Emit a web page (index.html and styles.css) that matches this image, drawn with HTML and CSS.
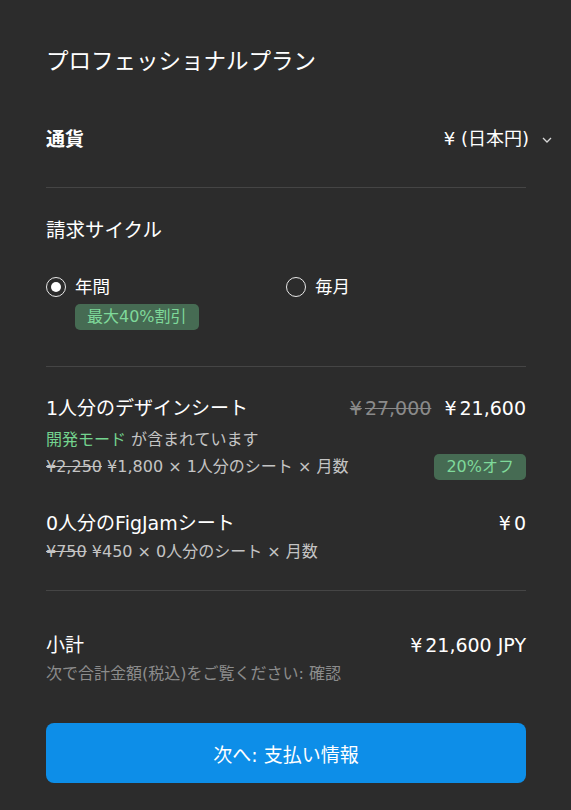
FILE: index.html
```html
<!DOCTYPE html>
<html lang="ja">
<head>
    <meta charset="UTF-8">
    <meta name="viewport" content="width=device-width, initial-scale=1.0">
    <title>プロフェッショナルプラン</title>
    <link rel="stylesheet" href="styles.css">
</head>
<body>
    <main class="plan">
        <h1 class="plan-title">プロフェッショナルプラン</h1>

        <div class="currency-row">
            <span class="currency-label">通貨</span>
            <span class="currency-select">
                ¥ (日本円)
                <svg class="chevron" width="10" height="6" viewBox="0 0 10 6">
                    <path d="M1 1l4 4 4-4" fill="none" stroke="#d8d8d8" stroke-width="1.3"/>
                </svg>
            </span>
        </div>

        <section class="billing">
            <h2 class="section-title">請求サイクル</h2>
            <div class="radio-grid">
                <div class="radio-item">
                    <label class="radio">
                        <span class="radio-circle checked"></span>
                        年間
                    </label>
                    <span class="badge badge-discount">最大40%割引</span>
                </div>
                <div class="radio-item">
                    <label class="radio">
                        <span class="radio-circle"></span>
                        毎月
                    </label>
                </div>
            </div>
        </section>

        <section class="seats">
            <div class="seat">
                <div class="line-main">
                    <span>1人分のデザインシート</span>
                    <span class="prices"><s class="old"><span class="yen">¥</span>27,000</s> <span class="yen">¥</span>21,600</span>
                </div>
                <div class="line-sub"><span class="green">開発モード</span> が含まれています</div>
                <div class="line-calc">
                    <span><s>¥2,250</s> ¥1,800 × 1人分のシート × 月数</span>
                    <span class="badge badge-off">20%オフ</span>
                </div>
            </div>
            <div class="seat seat-figjam">
                <div class="line-main">
                    <span>0人分のFigJamシート</span>
                    <span class="prices"><span class="yen">¥</span>0</span>
                </div>
                <div class="line-sub"><s>¥750</s> ¥450 × 0人分のシート × 月数</div>
            </div>
        </section>

        <section class="subtotal">
            <div class="line-main">
                <span>小計</span>
                <span class="prices"><span class="yen">¥</span>21,600 JPY</span>
            </div>
            <div class="line-note">次で合計金額(税込)をご覧ください: 確認</div>
        </section>

        <button type="button" class="next-button">次へ: 支払い情報</button>
    </main>
</body>
</html>
```

FILE: styles.css
```css
body {
    margin: 0;
    padding: 0;
    background-color: #2c2c2c;
    color: #ffffff;
    font-family: "DejaVu Sans", "Noto Sans CJK JP", sans-serif;
}

.plan {
    padding: 46px 45px 0 46px;
}

.plan-title {
    margin: 0;
    font-size: 22.5px;
    font-weight: 400;
    line-height: 30px;
}

.currency-row {
    display: flex;
    justify-content: space-between;
    align-items: center;
    margin-top: 51px;
    padding-bottom: 36px;
    border-bottom: 1px solid #454545;
    line-height: 24px;
}

.currency-label {
    font-size: 19px;
    font-weight: 700;
}

.currency-select {
    display: flex;
    align-items: center;
    font-size: 18px;
    margin-right: -26px;
}

.chevron {
    margin-left: 13px;
    margin-top: 1px;
}

.billing {
    padding-top: 30px;
    padding-bottom: 36px;
    border-bottom: 1px solid #454545;
}

.section-title {
    margin: 0;
    font-size: 19.5px;
    font-weight: 400;
    line-height: 26px;
}

.radio-grid {
    display: grid;
    grid-template-columns: 240px 1fr;
    margin-top: 31px;
}

.radio-item {
    display: flex;
    flex-direction: column;
    align-items: flex-start;
}

.radio {
    display: flex;
    align-items: center;
    gap: 9px;
    font-size: 17.5px;
    line-height: 24px;
}

.radio-circle {
    box-sizing: border-box;
    width: 20px;
    height: 20px;
    border: 1.5px solid #e8e8e8;
    border-radius: 50%;
    display: flex;
    align-items: center;
    justify-content: center;
}

.radio-circle.checked::after {
    content: "";
    width: 10px;
    height: 10px;
    border-radius: 50%;
    background-color: #ffffff;
}

.badge {
    display: inline-block;
    background-color: #466b53;
    color: #7fd99a;
    border-radius: 5px;
    font-size: 16px;
    line-height: 26px;
    padding: 0 12px;
}

.badge-discount {
    margin-top: 5px;
    margin-left: 29px;
}

.seats {
    padding-top: 28px;
    padding-bottom: 27px;
    border-bottom: 1px solid #454545;
}

.line-main {
    display: flex;
    justify-content: space-between;
    font-size: 19px;
    line-height: 26px;
}

.prices .yen {
    margin-right: 3px;
}

.prices .old {
    color: #8a8a8a;
    margin-right: 7px;
}

.line-sub {
    margin-top: 8px;
    font-size: 16px;
    line-height: 22px;
    color: #c4c4c4;
}

.green {
    color: #74d48f;
}

.line-calc {
    display: flex;
    justify-content: space-between;
    align-items: center;
    margin-top: 3px;
    font-size: 16px;
    line-height: 26px;
    color: #c4c4c4;
}

.seat-figjam {
    margin-top: 30px;
}

.seat-figjam .line-sub {
    margin-top: 5px;
}

.subtotal {
    padding-top: 41px;
}

.line-note {
    margin-top: 5px;
    font-size: 16px;
    line-height: 22px;
    color: #8c8c8c;
}

.next-button {
    display: block;
    width: 100%;
    height: 60px;
    margin-top: 38px;
    border: none;
    border-radius: 8px;
    background-color: #0d8ee8;
    color: #ffffff;
    font-family: inherit;
    font-size: 19px;
    cursor: pointer;
}
```
